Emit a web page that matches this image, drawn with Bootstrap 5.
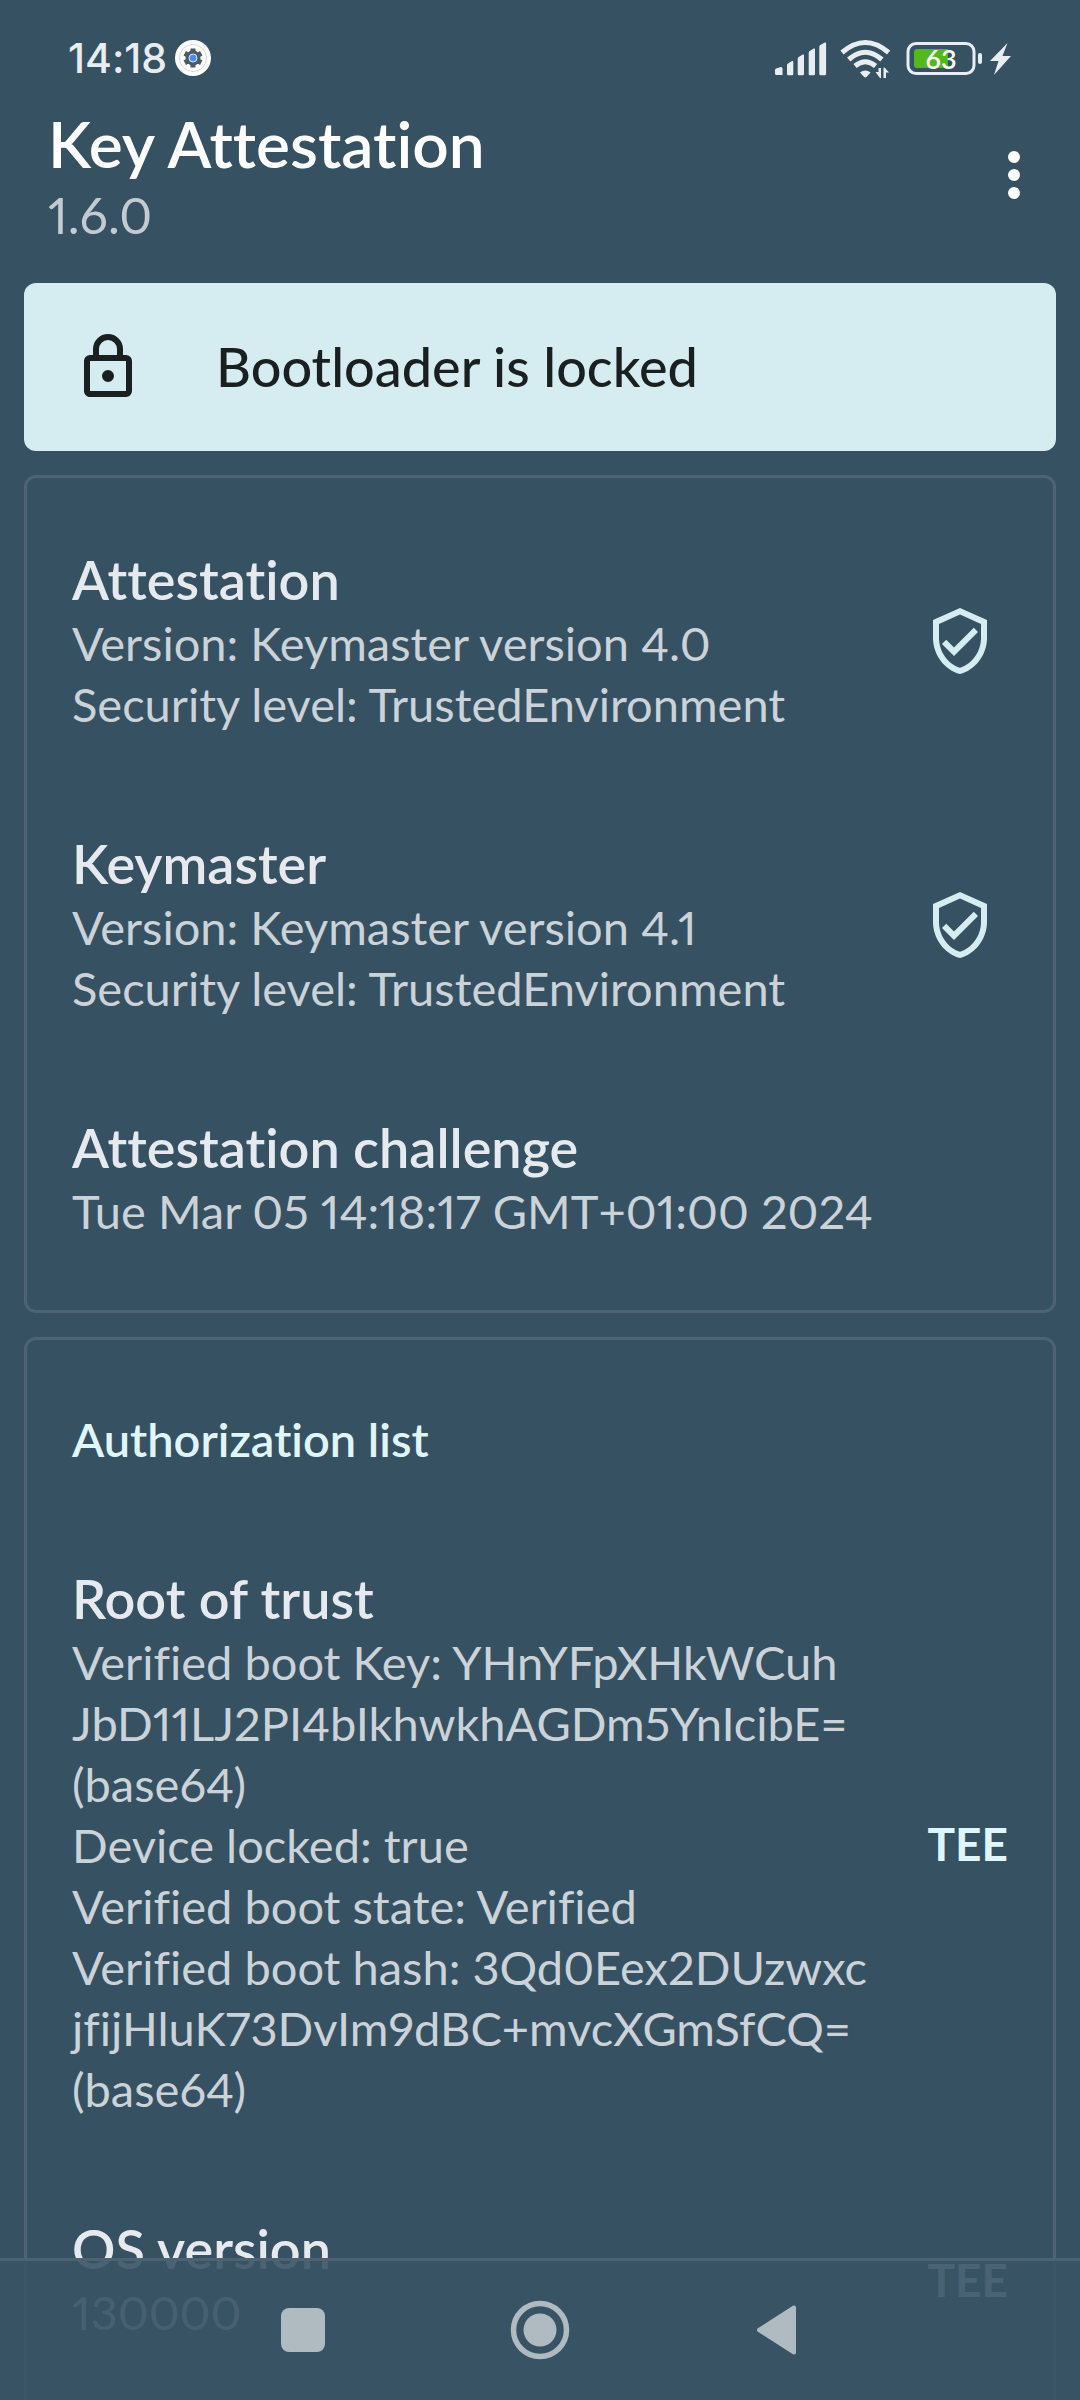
<!DOCTYPE html>
<html lang="en">
<head>
<meta charset="utf-8">
<meta name="viewport" content="width=device-width, initial-scale=1">
<title>Key Attestation</title>
<link href="https://cdn.jsdelivr.net/npm/bootstrap@5.3.0/dist/css/bootstrap.min.css" rel="stylesheet">
<style>
:root { --page: #365162; --line: #4d6372; --ice: #d5ecf0; --accent: #e0f6ff; }
body { background: var(--page); color: #cbd2d8; font-family: Lato, "Noto Sans", sans-serif; font-size: 47px; line-height: 61px; font-variant-ligatures: none; font-variant-numeric: proportional-nums; }
h1, h2, p { margin: 0; }
svg { display: block; flex: none; }
.status-bar { height: 116px; padding: 0 68px; color: #e8edf1; }
.clock { font-family: Inter, sans-serif; font-size: 41px; font-weight: 500; line-height: 48px; }
.app-bar { padding: 0 48px; height: 167px; }
.app-heading { margin-top: -8px; }
.app-title { font-size: 64px; line-height: 72px; font-weight: 600; color: #fff; }
.app-version { font-size: 50px; line-height: 70px; color: #c3cbd1; }
.menu-btn, .nav-btn { border: 0; background: none; padding: 0; display: flex; justify-content: center; align-items: center; }
.menu-btn { width: 36px; height: 118px; }
.scroller { scrollbar-width: none; }
.scroller::-webkit-scrollbar { display: none; }
.stack { padding: 0 24px 24px; gap: 24px; }
.card { --bs-card-bg: transparent; --bs-card-color: #cbd2d8; --bs-card-border-color: var(--line); --bs-card-border-width: 3px; --bs-card-border-radius: 12px; --bs-card-inner-border-radius: 9px; flex: none; }
.card.banner { background: var(--ice); border: 0; color: #1a1f20; height: 168px; padding: 0 48px; gap: 72px; }
.banner h2, .entry-title { font-size: 54px; line-height: 66px; font-weight: 600; }
.banner h2 { font-weight: 500; }
.entries { padding: 21px 45px 20px; }
.entry { padding: 48px 0; }
.entry-title { color: #e6eaee; }
.list-label { font-size: 47px; line-height: 61px; font-weight: 600; color: var(--accent); }
.shield { margin-right: 12px; }
.level { font-size: 46px; font-weight: 700; color: var(--accent); }
.nav-bar { height: 142px; padding-bottom: 2px; border-top: 3px solid var(--line); background: rgba(56, 83, 100, .9); }
.nav-btn { width: 237px; height: 100%; }
</style>
</head>
<body>
<div class="d-flex flex-column vh-100">
  <header class="flex-shrink-0">
    <div class="status-bar d-flex align-items-center justify-content-between">
      <div class="d-flex align-items-center gap-2">
        <span class="clock">14:18</span>
        <svg width="36" height="36" viewBox="0 0 36 36" aria-hidden="true">
          <circle cx="18" cy="18" r="18" fill="#fff"/>
          <circle cx="18" cy="18" r="13.500" fill="none" stroke="#d5d9dc"/>
          <g fill="#4a5b66"><rect x="15.500" y="8.500" width="5" height="19"/><rect x="15.500" y="8.500" width="5" height="19" transform="rotate(60 18 18)"/><rect x="15.500" y="8.500" width="5" height="19" transform="rotate(120 18 18)"/><circle cx="18" cy="18" r="7.500"/></g>
          <circle cx="18" cy="18" r="4" fill="#4b8bf5" stroke="#dfe8f5"/>
        </svg>
      </div>
      <svg width="237" height="44" viewBox="775 36 237 44" role="img" aria-label="Signal, Wi-Fi, battery 63, charging">
        <g fill="#e8edf1">
          <path d="M775 70q0-1 1-1.500l5-1.500q1.500 0 1.500 1.500V75h-6q-1.500 0-1.500-1.500zM787 65q0-1 1-1.500l4-2.500q1.300-.3 1.300 1V74q0 1.300-1.300 1.300h-3.700Q787 75.300 787 74zM797.700 59q0-1.300 1-2l4-2.500q1.300-.3 1.300 1V74q0 1.300-1.300 1.300h-3.700q-1.300 0-1.300-1.300zM808.700 53q0-1.300 1-2l4-2.500q1.300-.3 1.300 1V74q0 1.300-1.300 1.300H810q-1.300 0-1.300-1.300zM819.300 47q0-1.300 1-2l4.500-2.500q1.300-.3 1.300 1V74q0 1.300-1.300 1.300h-4.200q-1.300 0-1.300-1.300z"/>
          <path d="M860 72.500q5.300-4 10.600 0L866.500 77q-1.200.8-2.400 0z"/>
          <path d="M875.500 72h3v-4h2.500v10h-1zM889 72.500h-3V78h-2.500V67.500h1z"/>
          <path d="M1007.500 43L990 61h8.500l-4.500 14 17-19h-8.500z"/>
          <rect x="978" y="53" width="4" height="11" rx="2"/>
        </g>
        <g fill="none" stroke="#e8edf1" stroke-width="5">
          <path d="M842 52.500Q865.300 32.500 888.600 52.500"/><path d="M848.700 59.500Q865.300 45 881.900 59.500"/><path d="M855 66Q865.300 57.500 875.600 66"/>
        </g>
        <rect x="908" y="43.500" width="66" height="30" rx="8" fill="none" stroke="#e8edf1" stroke-width="3"/>
        <path d="M917 49h31v19h-31q-3 0-3-3V52q0-3 3-3z" fill="#52b81c"/>
        <text x="941" y="69" text-anchor="middle" font-family="Lato, sans-serif" font-size="27" font-weight="600" fill="#fff">63</text>
      </svg>
    </div>
    <div class="app-bar d-flex justify-content-between">
      <div class="app-heading">
        <h1 class="app-title">Key Attestation</h1>
        <p class="app-version">1.6.0</p>
      </div>
      <button class="menu-btn" type="button" aria-label="More options">
        <svg width="12" height="48" viewBox="0 0 12 48" fill="#fff"><circle cx="6" cy="6" r="6"/><circle cx="6" cy="24" r="6"/><circle cx="6" cy="42" r="6"/></svg>
      </button>
    </div>
  </header>

  <main class="scroller flex-grow-1 overflow-auto">
    <div class="stack d-flex flex-column">
      <section class="card banner flex-row align-items-center">
        <svg width="72" height="72" viewBox="0 0 24 24" fill="#1a1f20" aria-hidden="true"><path d="M18 8h-1V6A5 5 0 0 0 7 6v2H6a2 2 0 0 0-2 2v10c0 1.100.9 2 2 2h12a2 2 0 0 0 2-2V10a2 2 0 0 0-2-2zM9 6a3 3 0 0 1 6 0v2H9zm9 14H6V10h12zm-6-3a2 2 0 1 0 0-4 2 2 0 0 0 0 4z"/></svg>
        <h2>Bootloader is locked</h2>
      </section>

      <section class="card">
        <div class="entries">
          <div class="entry d-flex align-items-center justify-content-between">
            <div>
              <h2 class="entry-title">Attestation</h2>
              <p>Version: Keymaster version 4.0<br>Security level: TrustedEnvironment</p>
            </div>
            <svg class="shield" width="72" height="72" viewBox="0 0 24 24" fill="#d5ecf0" role="img" aria-label="Secure"><path d="M12 1L3 5v6c0 5.550 3.840 10.740 9 12 5.160-1.260 9-6.450 9-12V5zm7 10c0 4.520-2.980 8.690-7 9.930-4.020-1.240-7-5.410-7-9.930V6.300l7-3.110 7 3.110zM7.410 11.590L6 13l4 4 8-8-1.410-1.420L10 14.170z"/></svg>
          </div>
          <div class="entry d-flex align-items-center justify-content-between">
            <div>
              <h2 class="entry-title">Keymaster</h2>
              <p>Version: Keymaster version 4.1<br>Security level: TrustedEnvironment</p>
            </div>
            <svg class="shield" width="72" height="72" viewBox="0 0 24 24" fill="#d5ecf0" role="img" aria-label="Secure"><path d="M12 1L3 5v6c0 5.550 3.840 10.740 9 12 5.160-1.260 9-6.450 9-12V5zm7 10c0 4.520-2.980 8.690-7 9.930-4.020-1.240-7-5.410-7-9.930V6.300l7-3.110 7 3.110zM7.410 11.590L6 13l4 4 8-8-1.410-1.420L10 14.170z"/></svg>
          </div>
          <div class="entry">
            <h2 class="entry-title">Attestation challenge</h2>
            <p>Tue Mar 05 14:18:17 GMT+01:00 2024</p>
          </div>
        </div>
      </section>

      <section class="card">
        <div class="entries">
          <div class="entry"><h2 class="list-label">Authorization list</h2></div>
          <div class="entry d-flex align-items-center justify-content-between">
            <div>
              <h2 class="entry-title">Root of trust</h2>
              <p>Verified boot Key: YHnYFpXHkWCuh<br>JbD11LJ2PI4bIkhwkhAGDm5YnIcibE=<br>(base64)<br>Device locked: true<br>Verified boot state: Verified<br>Verified boot hash: 3Qd0Eex2DUzwxc<br>jfijHluK73DvIm9dBC+mvcXGmSfCQ=<br>(base64)</p>
            </div>
            <span class="level">TEE</span>
          </div>
          <div class="entry d-flex align-items-center justify-content-between">
            <div>
              <h2 class="entry-title">OS version</h2>
              <p>130000</p>
            </div>
            <span class="level">TEE</span>
          </div>
        </div>
      </section>
    </div>
  </main>
</div>

<nav class="nav-bar fixed-bottom d-flex justify-content-center" aria-label="System navigation">
  <button class="nav-btn" type="button" aria-label="Recent apps"><svg width="44" height="44" viewBox="0 0 44 44"><rect width="44" height="44" rx="8" fill="#afbac1"/></svg></button>
  <button class="nav-btn" type="button" aria-label="Home"><svg width="60" height="60" viewBox="0 0 60 60"><circle cx="30" cy="30" r="26.500" fill="none" stroke="#afbac1" stroke-width="5.500"/><circle cx="30" cy="30" r="16.500" fill="#afbac1"/></svg></button>
  <button class="nav-btn" type="button" aria-label="Back"><svg width="40" height="50" viewBox="0 0 40 50"><path d="M2 25L37 2.500V47.500z" fill="#afbac1" stroke="#afbac1" stroke-width="4" stroke-linejoin="round"/></svg></button>
</nav>
<script src="https://cdn.jsdelivr.net/npm/bootstrap@5.3.0/dist/js/bootstrap.bundle.min.js"></script>
</body>
</html>
